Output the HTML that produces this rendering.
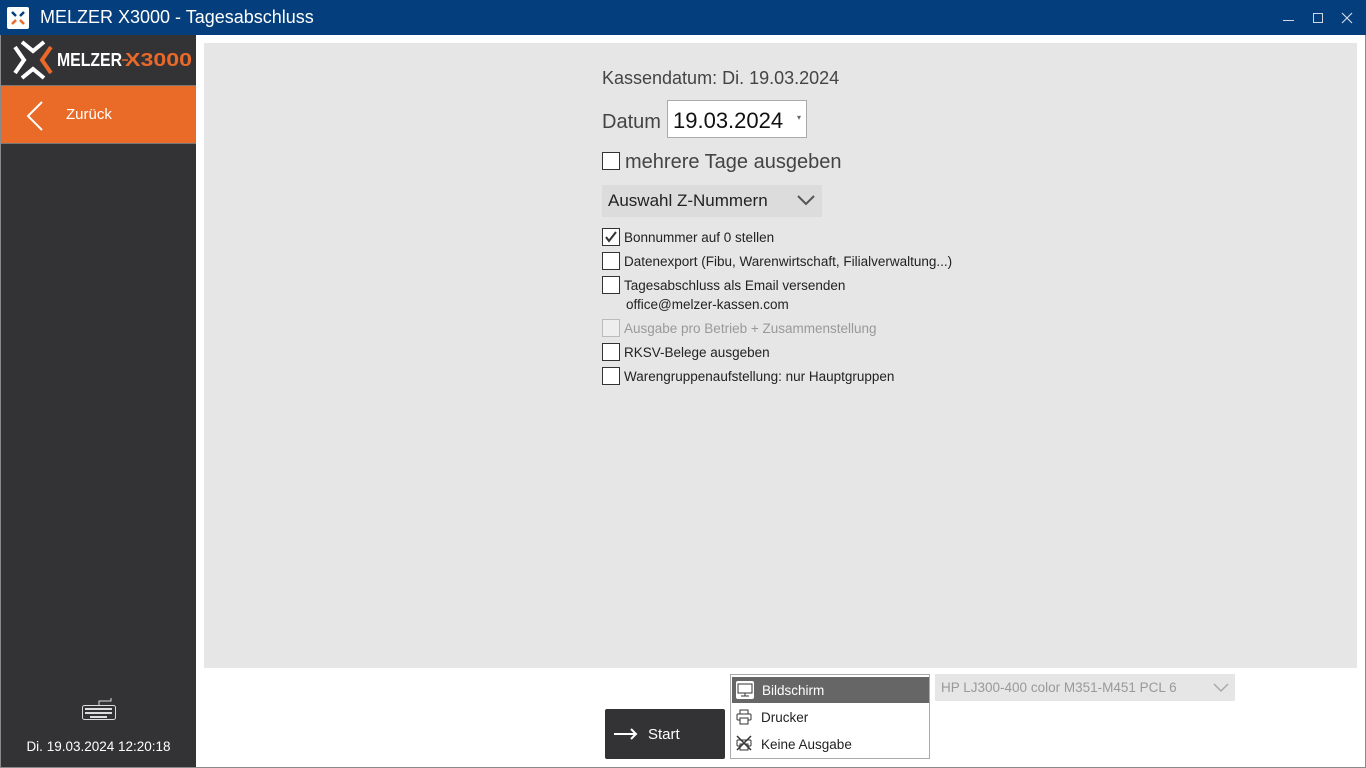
<!DOCTYPE html>
<html><head><meta charset="utf-8"><style>
*{margin:0;padding:0;box-sizing:border-box}
body{width:1366px;height:768px;position:relative;overflow:hidden;background:#fff;font-family:"Liberation Sans",sans-serif;color:#333}
.abs{position:absolute}
.title{left:0;top:0;width:1366px;height:35px;background:#043e7d;color:#fff;font-size:18px}
.side{left:1px;top:35px;width:195px;height:732px;background:#333335}
.panel{left:204px;top:43px;width:1153px;height:625px;background:#e6e6e6}
.cb{width:18px;height:18px;border:1px solid #333;background:#fff}
.lbl{font-size:13.5px;color:#222}
</style></head><body>
<div class="abs" style="left:0;top:0;width:1366px;height:768px;border:1px solid #8a8a8a;border-top:none"></div>
<div class="abs title">
 <div class="abs" style="left:7px;top:7px;width:22px;height:22px;background:#fff;border-radius:2px">
  <svg width="22" height="22" viewBox="0 0 22 22"><path d="M5 5l4 4M17 5l-4 4" stroke="#043e7d" stroke-width="2.5"/><path d="M5 17l4-4M17 17l-4-4" stroke="#e8692a" stroke-width="2.5"/></svg>
 </div>
 <div class="abs" style="left:40px;top:7px">MELZER X3000 - Tagesabschluss</div>
 <div class="abs" style="left:1283px;top:20px;width:11px;height:1px;background:#cfd8e6"></div>
 <div class="abs" style="left:1313px;top:13px;width:10px;height:10px;border:1px solid #cfd8e6"></div>
 <svg class="abs" style="left:1341px;top:12px" width="12" height="12"><path d="M1 1l10 10M11 1L1 11" stroke="#cfd8e6" stroke-width="1.2"/></svg>
</div>
<div class="abs side">
 <div class="abs" style="left:0;top:50px;width:195px;height:59px;background:#ea6a27;border-top:1px solid #777;border-bottom:1px solid #777">
  <svg class="abs" style="left:24px;top:14px" width="20" height="32"><path d="M17 2L3 16l14 14" stroke="#fff" stroke-width="2" fill="none"/></svg>
  <div class="abs" style="left:65px;top:20px;color:#fff;font-size:15px">Zurück</div>
 </div>
 <svg class="abs" style="left:80px;top:660px" width="36" height="26" viewBox="0 0 36 26">
  <path d="M18 10V6h12V3" stroke="#ddd" fill="none"/>
  <rect x="1.5" y="10.5" width="33" height="14" rx="2" fill="none" stroke="#ddd"/>
  <g fill="#ddd"><rect x="4" y="13" width="27" height="2"/><rect x="4" y="17" width="27" height="2"/><rect x="9" y="21" width="17" height="2"/></g>
 </svg>
 <div class="abs" style="left:0;top:704px;width:195px;text-align:center;color:#fff;font-size:13.5px">Di. 19.03.2024 12:20:18</div>
</div>
<svg class="abs" style="left:0;top:35px" width="200" height="50" viewBox="0 35 200 50">
 <g fill="none" stroke-width="4" stroke-linejoin="miter">
  <polyline points="15,47 24,60 15,73" stroke="#fff"/>
  <polyline points="22,42 33,51 44,42" stroke="#fff"/>
  <polyline points="22,78 33,69 44,78" stroke="#fff"/>
  <polyline points="51,47 42,60 51,73" stroke="#e8692a"/>
 </g>
 <text x="57" y="66" font-family="Liberation Sans" font-weight="bold" font-size="18" fill="#fff" textLength="65" lengthAdjust="spacingAndGlyphs">MELZER</text>
 <path d="M122 60h6" stroke="#e8692a" stroke-width="1.5"/>
 <text x="125" y="66" font-family="Liberation Sans" font-weight="bold" font-size="18" fill="#e8692a" textLength="67" lengthAdjust="spacingAndGlyphs">X3000</text>
</svg>
<div class="abs panel"></div>
<div class="abs" style="left:602px;top:68px;font-size:18px;color:#444">Kassendatum: Di. 19.03.2024</div>
<div class="abs" style="left:602px;top:111px;font-size:20px;color:#444">Datum</div>
<div class="abs" style="left:667px;top:100px;width:140px;height:38px;background:#fff;border:1px solid #aaa;font-size:22px;color:#111;padding:7px 0 0 5px">19.03.2024<span style="position:absolute;left:129px;top:12px;font-size:8px;color:#666">▾</span></div>
<div class="abs cb" style="left:602px;top:152px"></div>
<div class="abs" style="left:625px;top:151px;font-size:20px;color:#444">mehrere Tage ausgeben</div>
<div class="abs" style="left:602px;top:185px;width:220px;height:32px;background:#dcdcdc;font-size:17px;color:#222;padding:6px 0 0 6px">Auswahl Z-Nummern
 <svg class="abs" style="left:195px;top:10px" width="18" height="12"><path d="M1 1l8 8 8-8" stroke="#555" stroke-width="2" fill="none"/></svg></div>
<div class="abs cb" style="left:602px;top:228px"><svg width="16" height="16" style="position:absolute;left:0;top:0"><path d="M3 8l3 4 7-9" stroke="#333" stroke-width="2" fill="none"/></svg></div>
<div class="abs lbl" style="left:624px;top:230px">Bonnummer auf 0 stellen</div>
<div class="abs cb" style="left:602px;top:252px"></div>
<div class="abs lbl" style="left:624px;top:254px">Datenexport (Fibu, Warenwirtschaft, Filialverwaltung...)</div>
<div class="abs cb" style="left:602px;top:276px"></div>
<div class="abs lbl" style="left:624px;top:278px">Tagesabschluss als Email versenden</div>
<div class="abs lbl" style="left:626px;top:297px">office@melzer-kassen.com</div>
<div class="abs cb" style="left:602px;top:319px;border-color:#bbb;background:#eee"></div>
<div class="abs lbl" style="left:624px;top:321px;color:#999">Ausgabe pro Betrieb + Zusammenstellung</div>
<div class="abs cb" style="left:602px;top:343px"></div>
<div class="abs lbl" style="left:624px;top:345px">RKSV-Belege ausgeben</div>
<div class="abs cb" style="left:602px;top:367px"></div>
<div class="abs lbl" style="left:624px;top:369px">Warengruppenaufstellung: nur Hauptgruppen</div>

<div class="abs" style="left:605px;top:709px;width:120px;height:50px;background:#333335;border-radius:2px;color:#fff;font-size:15px">
 <svg class="abs" style="left:8px;top:19px" width="26" height="12"><path d="M1 6h22M18 1l5 5-5 5" stroke="#fff" stroke-width="2" fill="none"/></svg>
 <div class="abs" style="left:43px;top:17px">Start</div>
</div>
<div class="abs" style="left:730px;top:674px;width:200px;height:85px;background:#fff;border:1px solid #aaa;font-size:13.5px;color:#222">
 <div class="abs" style="left:1px;top:2px;width:197px;height:26px;background:#666;color:#fff"><div class="abs" style="left:30px;top:6px">Bildschirm</div>
  <svg class="abs" style="left:3px;top:3px" width="20" height="20"><rect x="1" y="1" width="18" height="18" rx="2" fill="#fff"/><rect x="3" y="4" width="14" height="9" fill="none" stroke="#333"/><path d="M10 13v3M6 16h8" stroke="#333"/></svg></div>
 <svg class="abs" style="left:5px;top:34px" width="16" height="16"><rect x="4" y="1" width="8" height="4" fill="none" stroke="#333"/><rect x="1" y="5" width="14" height="6" rx="1" fill="none" stroke="#333"/><rect x="4" y="9" width="8" height="6" fill="#fff" stroke="#333"/></svg>
 <div class="abs" style="left:30px;top:35px">Drucker</div>
 <svg class="abs" style="left:5px;top:60px" width="16" height="16"><rect x="1" y="5" width="14" height="6" rx="1" fill="none" stroke="#333"/><rect x="4" y="9" width="8" height="6" fill="#fff" stroke="#333"/><path d="M1 1l14 14M15 1L1 15" stroke="#333" stroke-width="1.5"/></svg>
 <div class="abs" style="left:30px;top:62px">Keine Ausgabe</div>
</div>
<div class="abs" style="left:935px;top:674px;width:300px;height:27px;background:#e6e6e6;color:#999;font-size:13.5px;padding:6px 0 0 6px">HP LJ300-400 color M351-M451 PCL 6
 <svg class="abs" style="left:278px;top:9px" width="16" height="10"><path d="M1 1l7 7 7-7" stroke="#aaa" stroke-width="1.5" fill="none"/></svg></div>
</body></html>
